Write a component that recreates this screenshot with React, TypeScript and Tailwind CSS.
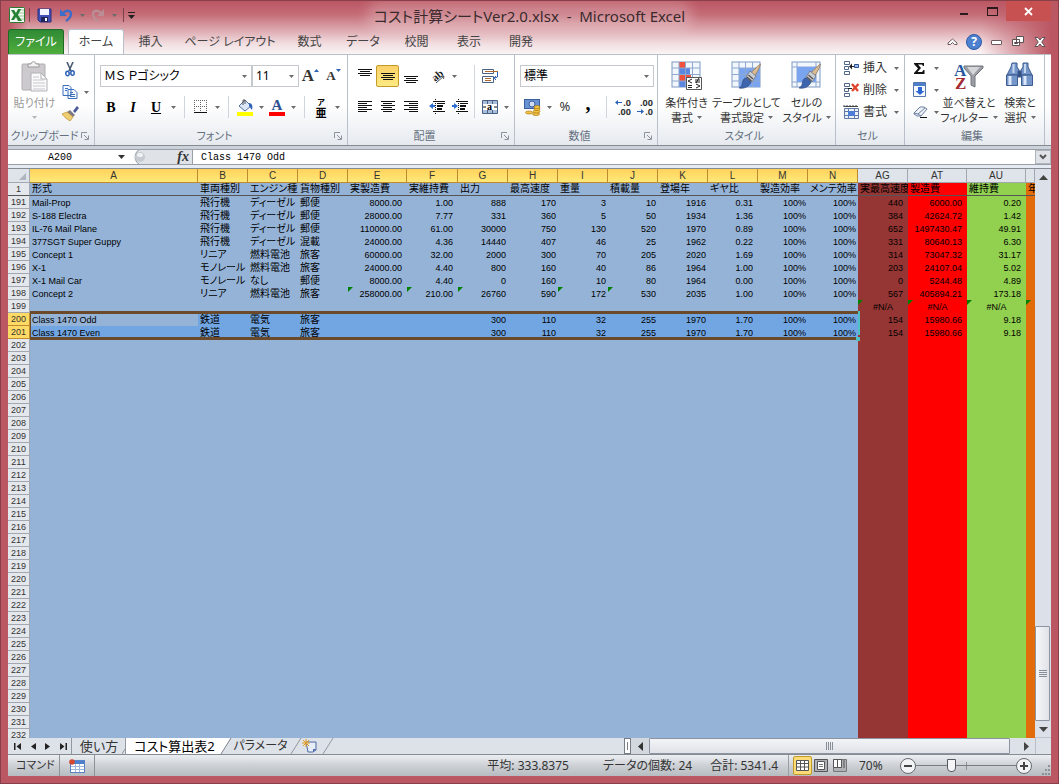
import { useState } from "react";
import type { ReactNode } from "react";

type Row = { n: number; cells: string[]; flags?: number[] };

const columns = [
  { id: "A", title: "形式" },
  { id: "B", title: "車両種別" },
  { id: "C", title: "エンジン種別" },
  { id: "D", title: "貨物種別" },
  { id: "E", title: "実製造費" },
  { id: "F", title: "実維持費" },
  { id: "G", title: "出力" },
  { id: "H", title: "最高速度" },
  { id: "I", title: "重量" },
  { id: "J", title: "積載量" },
  { id: "K", title: "登場年" },
  { id: "L", title: "ギヤ比" },
  { id: "M", title: "製造効率" },
  { id: "N", title: "メンテ効率" },
  { id: "AG", title: "実最高速度" },
  { id: "AT", title: "製造費" },
  { id: "AU", title: "維持費" },
  { id: "", title: "年" },
];

const rows: Row[] = [
  { n: 191, cells: ["Mail-Prop", "飛行機", "ディーゼル", "郵便", "8000.00", "1.00", "888", "170", "3", "10", "1916", "0.31", "100%", "100%", "440", "6000.00", "0.20"] },
  { n: 192, cells: ["S-188 Electra", "飛行機", "ディーゼル", "郵便", "28000.00", "7.77", "331", "360", "5", "50", "1934", "1.36", "100%", "100%", "384", "42624.72", "1.42"] },
  { n: 193, cells: ["IL-76 Mail Plane", "飛行機", "ディーゼル", "郵便", "110000.00", "61.00", "30000", "750", "130", "520", "1970", "0.89", "100%", "100%", "652", "1497430.47", "49.91"] },
  { n: 194, cells: ["377SGT Super Guppy", "飛行機", "ディーゼル", "混載", "24000.00", "4.36", "14440", "407", "46", "25", "1962", "0.22", "100%", "100%", "331", "80640.13", "6.30"] },
  { n: 195, cells: ["Concept 1", "リニア", "燃料電池", "旅客", "60000.00", "32.00", "2000", "300", "70", "205", "2020", "1.69", "100%", "100%", "314", "73047.32", "31.17"] },
  { n: 196, cells: ["X-1", "モノレール", "燃料電池", "旅客", "24000.00", "4.40", "800", "160", "40", "86", "1964", "1.00", "100%", "100%", "203", "24107.04", "5.02"] },
  { n: 197, cells: ["X-1 Mail Car", "モノレール", "なし", "郵便", "8000.00", "4.40", "0", "160", "10", "80", "1964", "0.00", "100%", "100%", "0", "5244.48", "4.89"] },
  { n: 198, cells: ["Concept 2", "リニア", "燃料電池", "旅客", "258000.00", "210.00", "26760", "590", "172", "530", "2035", "1.00", "100%", "100%", "567", "405894.21", "173.18"], flags: [4, 5, 6, 8, 9] },
  { n: 199, cells: ["", "", "", "", "", "", "", "", "", "", "", "", "", "", "#N/A", "#N/A", "#N/A"], flags: [14, 15, 16, 17] },
  { n: 200, cells: ["Class 1470 Odd", "鉄道", "電気", "旅客", "", "", "300", "110", "32", "255", "1970", "1.70", "100%", "100%", "154", "15980.66", "9.18"] },
  { n: 201, cells: ["Class 1470 Even", "鉄道", "電気", "旅客", "", "", "300", "110", "32", "255", "1970", "1.70", "100%", "100%", "154", "15980.66", "9.18"] },
];

for (let n = 202; n <= 232; n++) rows.push({ n, cells: [] });

const cellColor = (col: number, n: number) => {
  if (col === 14) return "bg-[#963634]";
  if (col === 15) return "bg-[#ff0000]";
  if (col === 16) return "bg-[#92d050]";
  if (col === 17) return "bg-[#e26b0a]";
  if (n === 201 || (n === 200 && col > 0)) return "bg-[#72a6e3]";
  return "bg-[#95b3d7]";
};

const cellAlign = (col: number, value: string) => {
  if (value === "#N/A") return "text-center text-[9px]";
  if (col === 0) return "pl-[2px] text-left text-[9px]";
  if (col < 4) return "pl-[2px] text-left text-[10px]";
  if ([4, 5, 11, 14, 15, 16].includes(col)) return "pr-[5px] text-right text-[9px]";
  return "pr-[2px] text-right text-[9px]";
};

const Caret = ({ light }: { light?: boolean }) => (
  <svg width="5" height="3" viewBox="0 0 5 3" className="shrink-0">
    <path d="M0 0h5L2.5 3z" fill={light ? "#b5b5b5" : "#6b6b6b"} />
  </svg>
);

const Drop = ({ label }: { label: string }) => (
  <button aria-label={label} className="flex h-[22px] w-2.5 items-center justify-center">
    <Caret />
  </button>
);

const Tool = ({ label, className = "w-[22px]", children }: { label: string; className?: string; children: ReactNode }) => (
  <button aria-label={label} className={`flex h-[22px] shrink-0 items-center justify-center ${className}`}>
    {children}
  </button>
);

const Sep = () => (
  <div className="flex h-[22px] w-3 justify-center">
    <div className="w-px bg-[#d0d5db]" />
  </div>
);

const Group = ({ title, className, launcher, children }: { title: string; className: string; launcher?: boolean; children: ReactNode }) => (
  <section className={`flex shrink-0 flex-col border-r border-[#b9c0c9] ${className}`}>
    <div className="flex flex-1">{children}</div>
    <div className="flex h-[18px] items-center pr-[5px] text-[11px] text-[#65707f]">
      <span className="flex-1 text-center whitespace-nowrap">{title}</span>
      {launcher && (
        <button aria-label={`${title}の詳細`}>
          <svg width="8" height="8" viewBox="0 0 8 8" fill="none" stroke="#8c939c">
            <path d="M.5 6V.5H6M3 3l4 4M7.500 3.500v4h-4" />
          </svg>
        </button>
      )}
    </div>
  </section>
);

const Big = ({ lines, icon, className, disabled }: { lines: string[]; icon: ReactNode; className: string; disabled?: boolean }) => (
  <button className={`flex flex-col items-center pt-1.5 text-[11px] leading-[15px] whitespace-nowrap ${disabled ? "text-[#999]" : "text-[#333]"} ${className}`}>
    <span className="flex h-[34px] items-start">{icon}</span>
    <span>{lines[0]}</span>
    <span className="flex h-[15px] items-center gap-1">
      {lines[1]}
      <Caret light={disabled} />
    </span>
  </button>
);

const Lines = ({ spans, y = 1 }: { spans: [number, number][]; y?: number }) => (
  <svg width="16" height="16" viewBox="0 0 16 16" shapeRendering="crispEdges">
    {spans.map(([x, w], i) => (
      <rect key={i} x={x} y={y + i * 2} width={w} height="1" fill="#111" />
    ))}
  </svg>
);

const Paragraph = ({ at }: { at: "l" | "c" | "r" }) => (
  <svg width="16" height="16" viewBox="0 0 16 16" shapeRendering="crispEdges" fill="#111">
    {[0, 1, 2, 3, 4, 5].map((i) => {
      const w = i % 2 ? 9 : 14;
      const x = at === "l" ? 1 : at === "c" ? 1 + (14 - w) / 2 : 15 - w;
      return <rect key={i} x={Math.floor(x)} y={2 + i * 2} width={w} height="1" />;
    })}
  </svg>
);

const Indent = ({ out }: { out?: boolean }) => (
  <svg width="17" height="16" viewBox="0 0 17 16">
    <path shapeRendering="crispEdges" stroke="#111" d="M4 2.500h12M8 4.500h8M8 6.500h5" />
    <path shapeRendering="crispEdges" stroke="#111" strokeWidth="2" d="M8 7h6M8 10h5" />
    <path shapeRendering="crispEdges" stroke="#111" d="M4 12.500h12" />
    <path stroke="#111" strokeDasharray="1 1" d="M6.500 0v15" />
    <path fill="#2c6fd0" d={out ? "M0 7l4-3v2h2v2H4v2z" : "M6 7L2 4v2H0v2h2v2z"} />
  </svg>
);

const Brush = () => (
  <g>
    <path d="M29.500 3c-4 3-7 6-9.500 9l3.500 3c3-4 5-8 6-12z" fill="#d9bb94" stroke="#8c6f50" strokeWidth=".7" />
    <path d="M19 10l6 5-4 6-6-5z" fill="#c9cdd4" stroke="#6d737c" strokeWidth=".8" />
    <path d="M17.500 14l4.500 4M16 16l4.500 4" stroke="#55504c" strokeWidth="1.200" />
    <path d="M15 17l5 4c-2 5-7 7-12 6 3-2 3-3 3.500-6 .5-2 1.500-4 3.500-4z" fill="#3d64ad" stroke="#29447c" strokeWidth=".6" />
  </g>
);

const GridIcon = ({ children }: { children?: ReactNode }) => (
  <svg width="32" height="30" viewBox="0 0 32 30">
    <rect x="1" y="1" width="28" height="25" fill="#f2f6fd" stroke="#7f99c2" />
    {children}
  </svg>
);

const CellIcon = ({ kind }: { kind: "in" | "del" | "fmt" }) => (
  <svg width="17" height="16" viewBox="0 0 17 16" fill="none">
    {kind === "fmt" ? (
      <>
        <path d="M1 1v2M4 1v2M7 1v2M10 1v2M13 1v2M1 2.500h14" stroke="#444" />
        <path d="M1.500 4.500h14v10h-14zM1.500 7.500h14M1.500 11.500h14M5.500 4.500v10M11.500 4.500v10" stroke="#5f7aa3" fill="#eef3fb" />
        <path d="M5 7h7v5H5z" fill="#4c7fd8" />
      </>
    ) : (
      <>
        <path d="M1.500 1.500h5v3h-5zM1.500 11.500h5v3h-5zM1.500 6.500h4v3h-4z" stroke="#4f6688" fill="#fff" />
        {kind === "in" ? (
          <>
            <path d="M8 6.500h3" stroke="#222" />
            <path d="M6 6.500l3-3v6z" fill="#222" />
            <path d="M11.500 4.500h4v3h-4z" stroke="#2c4f8f" fill="#9dbdf0" />
          </>
        ) : (
          <>
            <path d="M5 6.500h4" stroke="#222" />
            <path d="M9 2l6 7M15.500 2L9 9" stroke="#e0452e" strokeWidth="2.400" />
          </>
        )}
      </>
    )}
  </svg>
);

const EditRow = ({ label, children }: { label: string; children: ReactNode }) => (
  <div className="flex">
    <Tool label={label}>{children}</Tool>
    <Drop label={`${label}のオプション`} />
  </div>
);

const Select = ({ label, value, className }: { label: string; value: string; className: string }) => (
  <div className={`relative ${className}`}>
    <select aria-label={label} defaultValue={value} className="h-[22px] w-full appearance-none border border-[#c5c9ce] bg-white pr-3 pl-[3px] text-[12px] text-black">
      <option>{value}</option>
    </select>
    <span className="pointer-events-none absolute top-[10px] right-[5px]">
      <Caret />
    </span>
  </div>
);

function TitleBar() {
  return (
    <header className="flex h-7 shrink-0 items-start">
      <div className="flex h-7 w-[240px] items-center pl-px">
        <svg width="17" height="17" viewBox="0 0 17 17">
          <rect x=".5" y=".5" width="15" height="15" rx="1" fill="#f4faf2" stroke="#2c7a33" />
          <path d="M10 3h5M10 6h5M10 9h5M10 12h5" stroke="#9bc79a" />
          <path d="M2 3h3l2 3 2-4h3L9 8l4 6H9L7 10l-2 3H2l3-5z" fill="#268336" />
        </svg>
        <i className="mx-[3px] h-3.5 w-px bg-[#7b4149]" />
        <Tool label="保存">
          <svg width="15" height="15" viewBox="0 0 15 15">
            <path d="M1 1h13v13H3l-2-2z" fill="#4250b5" stroke="#27317f" />
            <path d="M3 1h9v6H3z" fill="#f3f6ff" />
            <path d="M4 9h7v5H4z" fill="#20255c" />
            <path d="M8 10h2v3H8z" fill="#fff" />
          </svg>
        </Tool>
        <Tool label="元に戻す">
          <svg width="14" height="14" viewBox="0 0 14 14" fill="none">
            <path d="M4 5c4-4 8-2 8 1 0 3-2 5-5 7" stroke="#3c6cc9" strokeWidth="2.400" />
            <path d="M1 1v7h7z" fill="#3c6cc9" />
          </svg>
        </Tool>
        <Drop label="元に戻すの履歴" />
        <Tool label="やり直し">
          <svg width="14" height="14" viewBox="0 0 14 14" fill="none">
            <path d="M10 5C6 1 2 3 2 6c0 3 2 5 5 7" stroke="#b98e94" strokeWidth="2.400" />
            <path d="M13 1v7H6z" fill="#b98e94" />
          </svg>
        </Tool>
        <Drop label="やり直しの履歴" />
        <i className="ml-1 h-3.5 w-px bg-[#7b4149]" />
        <button aria-label="クイック アクセス ツール バーのカスタマイズ" className="ml-1">
          <svg width="7" height="7" viewBox="0 0 7 7">
            <path d="M0 0h7v1H0zM0 3h7L3.500 7z" fill="#222" />
          </svg>
        </button>
      </div>
      <h1 className="flex h-7 flex-1 items-center justify-center pt-px text-[15px] whitespace-nowrap text-[#3a2a2d]">
        <span className="rounded-full bg-white/20 leading-4 shadow-[0_0_12px_8px_rgba(255,255,255,0.2)]">コスト計算シートVer2.0.xlsx&nbsp; -&nbsp; Microsoft Excel</span>
      </h1>
      <div className="flex w-[240px] justify-end">
        <button aria-label="最小化" className="flex h-5 w-7 items-center justify-center pt-1.5">
          <i className="h-[2px] w-2 bg-[#2b1a1c]" />
        </button>
        <button aria-label="最大化" className="flex h-5 w-7 items-center justify-center">
          <i className="h-[9px] w-[11px] border border-t-2 border-[#2b1a1c]" />
        </button>
        <button aria-label="閉じる" className="flex h-5 w-[45px] items-center justify-center bg-[#c75050]">
          <svg width="9" height="9" viewBox="0 0 9 9" stroke="#fff" strokeWidth="1.800">
            <path d="M1 1l7 7M8 1L1 8" />
          </svg>
        </button>
      </div>
    </header>
  );
}

function RibbonTabs() {
  const tabs = [
    ["挿入", "w-[53px]"],
    ["ページ レイアウト", "w-[106px]"],
    ["数式", "w-[53px]"],
    ["データ", "w-[54px]"],
    ["校閲", "w-[53px]"],
    ["表示", "w-[52px]"],
    ["開発", "w-[52px]"],
  ];
  return (
    <nav className="flex h-[25px] shrink-0 text-[12px] whitespace-nowrap text-[#444]">
      <button className="w-14 rounded-t-[3px] border border-b-0 border-[#1f6b25] bg-linear-to-b from-[#2f8a35] to-[#4fae3c] text-white">ファイル</button>
      <button className="ml-1 w-14 rounded-t-[3px] border border-b-0 border-[#b9c0c9] bg-white">ホーム</button>
      {tabs.map(([name, width]) => (
        <button key={name} className={width}>
          {name}
        </button>
      ))}
      <div className="ml-auto flex items-center gap-2 pr-[5px]">
        <button aria-label="リボンの最小化">
          <svg width="11" height="9" viewBox="0 0 11 9" fill="#fff" stroke="#6b5a5d">
            <path d="M1 6l4.500-4L10 6v1.500H7.500l-2-2-2 2H1z" />
          </svg>
        </button>
        <button aria-label="ヘルプ" className="flex size-4 items-center justify-center rounded-full border border-[#2c5ba8] bg-[#4d80cf] text-[12px] font-bold text-white">?</button>
        <button aria-label="ブックの最小化" className="ml-px flex h-4 w-3 items-center">
          <i className="mt-[2px] h-[5px] w-[11px] rounded-[1px] border border-[#6b5a5d] bg-white" />
        </button>
        <button aria-label="ブックを元のサイズに戻す" className="ml-px">
          <svg width="13" height="11" viewBox="0 0 13 11" fill="#fff" stroke="#5d5053">
            <path d="M4.500.5h7v6h-7zM.5 3.500h7v6h-7zM2.500 6.500h3v1h-3z" />
          </svg>
        </button>
        <button aria-label="ブックを閉じる" className="ml-px">
          <svg width="12" height="10" viewBox="0 0 12 10" fill="#fff" stroke="#5d5053">
            <path d="M1 .5h3l2 2.500 2-2.500h3L7.800 5 11 9.500H8L6 7 4 9.500H1L4.200 5z" />
          </svg>
        </button>
      </div>
    </nav>
  );
}

function Ribbon() {
  return (
    <div className="flex h-[92px] shrink-0 overflow-hidden border-y border-t-[#b9c0c9] border-b-[#868b92] bg-linear-to-b from-white from-55% to-[#e6eaef] text-[12px] text-[#333]">
      <Group title="クリップボード" className="w-[87px]" launcher>
        <Big
          disabled
          className="ml-[3px] w-[47px]"
          lines={["貼り付け", ""]}
          icon={
            <svg width="28" height="32" viewBox="0 0 28 32">
              <rect x="1" y="3" width="23" height="26" rx="1" fill="#cdcacd" stroke="#b0adb0" />
              <path d="M7 6V3h3c0-3 5-3 5 0h3v3z" fill="#f3f3f3" stroke="#999" />
              <path d="M10 12h10l6 6v12H10z" fill="#fafafa" stroke="#b0b0b4" />
              <path d="M20 12v6h6" fill="none" stroke="#b0b0b4" />
              <path d="M12 16h6M12 19h11M12 22h12M12 25h12M12 28h12" stroke="#c8c8cc" />
            </svg>
          }
        />
        <div className="flex flex-col pt-1 pl-px">
          <Tool label="切り取り">
            <svg width="14" height="16" viewBox="0 0 14 16" fill="none">
              <path d="M4 0l4 9M10 0L6 9" stroke="#4a5a72" strokeWidth="1.600" />
              <ellipse cx="4.500" cy="11.500" rx="1.700" ry="2.300" stroke="#2e62b8" strokeWidth="1.500" />
              <ellipse cx="9.500" cy="11" rx="1.700" ry="2.300" stroke="#2e62b8" strokeWidth="1.500" />
            </svg>
          </Tool>
          <div className="flex">
            <Tool label="コピー">
              <svg width="16" height="15" viewBox="0 0 16 15" fill="#f4f8ff" stroke="#3c6fbd">
                <path d="M1 .5h6l2 2v8H1zM6 4.500h6l3 3v6H6z" />
                <path d="M3 3.500h3M3 5.500h2M8 7.500h3M8 9.500h5M8 11.500h5" />
              </svg>
            </Tool>
            <Drop label="コピーのオプション" />
          </div>
          <Tool label="書式のコピー">
            <svg width="17" height="16" viewBox="0 0 17 16">
              <path d="M11 5l4-5 2 2-4 5z" fill="#4c5b9a" />
              <path d="M8 4l5 5-2 2-6-5z" fill="#7c7a86" />
              <path d="M5 6l6 5-3 4C5 13 2 11 0 8z" fill="#f0cf72" stroke="#b98d2b" strokeWidth=".7" />
            </svg>
          </Tool>
        </div>
      </Group>

      <Group title="フォント" className="w-[253px]" launcher>
        <div className="flex flex-col gap-[9px] pt-2.5 pl-[5px]">
          <div className="flex">
            <Select label="フォント名" value="ＭＳ Ｐゴシック" className="w-[152px]" />
            <Select label="フォント サイズ" value="11" className="w-[47px]" />
            <Tool label="フォント サイズの拡大" className="w-[23px]">
              <span className="font-['Liberation_Serif',serif] text-[17px] font-bold">A</span>
              <svg width="5" height="14" viewBox="0 0 5 14"><path d="M0 3h5L2.500 0z" fill="#2e62b8" /></svg>
            </Tool>
            <Tool label="フォント サイズの縮小" className="w-[23px]">
              <span className="font-['Liberation_Serif',serif] text-[13px] font-bold">A</span>
              <svg width="5" height="14" viewBox="0 0 5 14"><path d="M0 0h5L2.500 3z" fill="#2e62b8" /></svg>
            </Tool>
          </div>
          <div className="flex font-['Liberation_Serif',serif] text-[14px] text-black">
            <Tool label="太字"><b>B</b></Tool>
            <Tool label="斜体"><b className="italic">I</b></Tool>
            <Tool label="下線" className="w-6"><b className="underline">U</b></Tool>
            <Drop label="下線の種類" />
            <Sep />
            <Tool label="罫線">
              <svg width="14" height="14" viewBox="0 0 14 14" stroke="#666" fill="none">
                <path strokeDasharray="1 1" d="M.5 0v12M6.500 0v12M12.500 0v12M0 .5h13M0 6.500h13" />
                <path stroke="#111" d="M0 12.500h13" />
              </svg>
            </Tool>
            <Drop label="罫線の種類" />
            <Sep />
            <Tool label="塗りつぶしの色">
              <svg width="17" height="17" viewBox="0 0 17 17">
                <path d="M8 1l6 6-6 5-6-5z" fill="#dce8f8" stroke="#51719f" />
                <path d="M6 6V1h2v4" fill="none" stroke="#555" />
                <path d="M12 4c3 0 4 3 3 7-1-1-2-3-3-4z" fill="#2e62b8" />
                <path d="M0 13h16v4H0z" fill="#ffff00" />
              </svg>
            </Tool>
            <Drop label="塗りつぶしの色の選択" />
            <Tool label="フォントの色">
              <span className="w-4 border-b-4 border-[#ff0000] text-center text-[15px] leading-[13px] font-bold text-[#2c4f8f]">A</span>
            </Tool>
            <Drop label="フォントの色の選択" />
            <Sep />
            <Tool label="ふりがな">
              <span className="flex flex-col items-center font-['Noto_Sans_CJK_JP',sans-serif] font-bold">
                <span className="text-[8px] leading-[9px]">ア</span>
                <span className="text-[11px] leading-[12px]">亜</span>
              </span>
            </Tool>
            <Drop label="ふりがなのオプション" />
          </div>
        </div>
      </Group>

      <Group title="配置" className="w-[167px]" launcher>
        <div className="flex pt-2.5 pl-[5px]">
          <div className="flex flex-col gap-[9px]">
            <div className="flex">
              <Tool label="上揃え" className="w-[23px]"><Lines spans={[[1, 14], [3, 10], [1, 14], [3, 10]]} /></Tool>
              <Tool label="上下中央揃え" className="w-[23px] rounded-[2px] border border-[#c29b29] bg-linear-to-b from-[#fbd069] to-[#fdea82]">
                <Lines y={5} spans={[[1, 14], [3, 10], [1, 14], [3, 10]]} />
              </Tool>
              <Tool label="下揃え" className="w-[23px]"><Lines y={8} spans={[[1, 14], [3, 10], [1, 14], [3, 10]]} /></Tool>
              <Tool label="方向" className="ml-1 w-[23px]">
                <svg width="20" height="20" viewBox="0 0 20 20">
                  <text x="5" y="14" fontSize="11" fontWeight="bold" fontFamily="Liberation Serif" transform="rotate(-40 9 12)" fill="#222">ab</text>
                  <path d="M8 17l8-7M16 10l-3 .5M16 10l-.5 3" stroke="#555" fill="none" />
                </svg>
              </Tool>
              <Drop label="方向の選択" />
            </div>
            <div className="flex">
              <Tool label="左揃え" className="w-[23px]"><Paragraph at="l" /></Tool>
              <Tool label="中央揃え" className="w-[23px]"><Paragraph at="c" /></Tool>
              <Tool label="右揃え" className="w-[23px]"><Paragraph at="r" /></Tool>
              <Tool label="インデントを減らす" className="ml-1 w-[23px]"><Indent out /></Tool>
              <Tool label="インデントを増やす" className="w-[23px]"><Indent /></Tool>
            </div>
          </div>
          <div className="mx-[2px] h-[53px] w-px bg-[#d0d5db]" />
          <div className="flex flex-col gap-[9px] pl-[2px]">
            <Tool label="折り返して全体を表示する">
              <svg width="17" height="16" viewBox="0 0 17 16" fill="#fff" stroke="#4a6187">
                <path d="M.5 1.500h11v4H.5zM.5 8.500h11v6H.5z" />
                <path d="M3 3.500h13M3 10.500h6M3 12.500h6" stroke="#b0682e" />
                <path d="M15.500 4v5l-3 1M12 10l2-2M12 10l2 2" stroke="#2e62b8" fill="none" />
              </svg>
            </Tool>
            <div className="flex">
              <Tool label="セルを結合して中央揃え">
                <svg width="17" height="15" viewBox="0 0 17 15">
                  <path d="M.5.5h15v13H.5z" fill="#a9bedb" stroke="#4a6187" />
                  <path d="M5.500 0v4M10.500 0v4M5.500 10v4M10.500 10v4" stroke="#4a6187" />
                  <path d="M1 4h14v6H1z" fill="#fff" />
                  <path d="M1 7h3M12 7h3" stroke="#111" />
                  <text x="5" y="10" fontSize="10" fontWeight="bold" fontFamily="Liberation Serif">a</text>
                </svg>
              </Tool>
              <Drop label="結合のオプション" />
            </div>
          </div>
        </div>
      </Group>

      <Group title="数値" className="w-[143px]" launcher>
        <div className="flex flex-col gap-[9px] pt-2.5 pl-[5px]">
          <Select label="数値の書式" value="標準" className="w-[134px]" />
          <div className="flex">
            <Tool label="通貨表示形式" className="w-6">
              <svg width="17" height="17" viewBox="0 0 17 17">
                <rect x=".5" y=".5" width="15" height="9" fill="#6a93d6" stroke="#3b5f9c" />
                <circle cx="8" cy="5" r="3" fill="#cfdef5" stroke="#3b5f9c" />
                <g fill="#f4c545" stroke="#a97a12" strokeWidth=".7">
                  <ellipse cx="12" cy="15" rx="3.500" ry="1.500" />
                  <ellipse cx="12.500" cy="12.500" rx="3.500" ry="1.500" />
                  <ellipse cx="13" cy="10" rx="3" ry="1.500" />
                  <ellipse cx="13" cy="8" rx="3" ry="1.500" />
                  <ellipse cx="5" cy="13.500" rx="3.500" ry="1.500" />
                </g>
              </svg>
            </Tool>
            <Drop label="通貨の選択" />
            <Tool label="パーセント スタイル"><span className="text-[13px]">%</span></Tool>
            <Tool label="桁区切りスタイル" className="w-6 text-black">
              <span className="h-[22px] font-['Liberation_Serif',serif] text-[20px] leading-[14px] font-bold">,</span>
            </Tool>
            <Sep />
            <Tool label="小数点以下の表示桁数を増やす">
              <span className="flex flex-col items-end text-[9px] leading-[9px] font-bold">
                <span className="flex items-center gap-px">
                  <svg width="7" height="5" viewBox="0 0 7 5"><path d="M0 2.500L3 0v2h4v1H3v2z" fill="#2e62b8" /></svg>
                  .0
                </span>
                <span>.00</span>
              </span>
            </Tool>
            <Tool label="小数点以下の表示桁数を減らす">
              <span className="flex flex-col items-end text-[9px] leading-[9px] font-bold">
                <span>.00</span>
                <span className="flex items-center gap-px">
                  <svg width="7" height="5" viewBox="0 0 7 5"><path d="M7 2.500L4 0v2H0v1h4v2z" fill="#2e62b8" /></svg>
                  .0
                </span>
              </span>
            </Tool>
          </div>
        </div>
      </Group>

      <Group title="スタイル" className="w-[178px]">
        <Big
          className="w-[57px]"
          lines={["条件付き", "書式"]}
          icon={
            <GridIcon>
              <path d="M8 1h6v25H8z" fill="#f0503c" />
              <path d="M8 7h11v6H8zM8 20h6v6H8z" fill="#5b87e0" />
              <path d="M14 14h6v6h-6z" fill="#f0503c" />
              <path d="M1 7h28M1 13.500h28M1 20h28M8 1v25M14.500 1v25M21.500 1v25" stroke="#8fa8d0" fill="none" />
              <path d="M15.500 16.500h15v12h-15z" fill="#fff" stroke="#555" />
              <path d="M21 18l-4 2 4 2M17 24.500h4M17 26.500h4M24 19h5M24 21h5M28 17l-3 5M25 23l4 2-4 2" stroke="#222" fill="none" />
            </GridIcon>
          }
        />
        <Big
          className="w-[63px]"
          lines={["テーブルとして", "書式設定"]}
          icon={
            <GridIcon>
              <path d="M8 7h21v19H8z" fill="#7ba4ee" />
              <path d="M1 7h28M1 13.500h28M1 20h28M8 1v25M14.500 1v25M21.500 1v25" stroke="#8fa8d0" fill="none" />
              <Brush />
            </GridIcon>
          }
        />
        <Big
          className="w-[57px]"
          lines={["セルの", "スタイル"]}
          icon={
            <GridIcon>
              <path d="M1 6h28M1 21h28M6 1v25M25 1v25" stroke="#8fa8d0" fill="none" />
              <path d="M6 6h19v15H6z" fill="#7ba4ee" />
              <Brush />
            </GridIcon>
          }
        />
      </Group>

      <Group title="セル" className="w-[69px]">
        <div className="flex flex-col pt-[2px] pl-[7px]">
          <button className="flex h-[22px] items-center gap-[3px]"><CellIcon kind="in" />挿入<span className="ml-1"><Caret /></span></button>
          <button className="flex h-[22px] items-center gap-[3px]"><CellIcon kind="del" />削除<span className="ml-1"><Caret /></span></button>
          <button className="flex h-[22px] items-center gap-[3px]"><CellIcon kind="fmt" />書式<span className="ml-1"><Caret /></span></button>
        </div>
      </Group>

      <Group title="編集" className="w-[140px]">
        <div className="flex flex-col pt-[2px] pl-1">
          <EditRow label="合計">
            <svg width="12" height="11" viewBox="0 0 12 11"><path d="M0 0h10v3H9L8 1.500H4L7 5 3.500 9H8l1.500-2h1V11H0v-1l4-4.500L0 1z" fill="#111" /></svg>
          </EditRow>
          <EditRow label="フィル">
            <svg width="14" height="16" viewBox="0 0 14 16">
              <path d="M.5.5h12v14H.5z" fill="#f4f8ff" stroke="#5577ab" />
              <path d="M1 1h11v3H1z" fill="#4d7fc9" />
              <path d="M5 5h4v4h2.500L7 13 2.500 9H5z" fill="#2b66d4" />
            </svg>
          </EditRow>
          <EditRow label="クリア">
            <svg width="15" height="12" viewBox="0 0 15 12">
              <path d="M1 7l6-6h4l3 2-6 7H4L1 8z" fill="#eef2f8" stroke="#6b7f9f" />
              <path d="M1 7l4 1 3 2M5 8l7-6" fill="none" stroke="#6b7f9f" />
              <path d="M7 11.500h7" stroke="#111" />
            </svg>
          </EditRow>
        </div>
        <Big
          className="w-[56px]"
          lines={["並べ替えと", "フィルター"]}
          icon={
            <svg width="30" height="34" viewBox="0 0 30 34">
              <path d="M10 5h19v2l-8 8v11l-4-2v-9L10 7z" fill="#9b9fa5" stroke="#70757c" />
              <path d="M13 6h13l-7 8z" fill="#d4d6d9" />
              <text x="0" y="15" fontSize="17" fontWeight="bold" fontFamily="Liberation Serif" fill="#28579f">A</text>
              <text x="1" y="28" fontSize="17" fontWeight="bold" fontFamily="Liberation Serif" fill="#a32a30">Z</text>
            </svg>
          }
        />
        <Big
          className="w-[46px]"
          lines={["検索と", "選択"]}
          icon={
            <svg width="28" height="28" viewBox="0 0 28 28" fill="#7496c8" stroke="#3c5b90">
              <path d="M6 2h5v4l2 3v5h2V9l2-3V2h5v4l4 8H1l4-8z" />
              <path d="M.5 14h11v10.500H.5zM15.500 14h11v10.500h-11z" />
              <path d="M12 10h3v6h-3z" fill="#324f80" />
              <path d="M4 15v9M19 15v9" stroke="#dce8fa" strokeWidth="3" />
              <path d="M7.500 3v9M19 3v9" stroke="#c5d6ef" strokeWidth="2" />
            </svg>
          }
        />
      </Group>
    </div>
  );
}

function FormulaBar() {
  const [formula, setFormula] = useState("Class 1470 Odd");
  return (
    <div className="shrink-0 border-b border-[#868b92] bg-[#e6ebf3]">
      <div className="h-[3px] bg-[#ccd2da]" />
      <div className="flex h-4 border-y border-[#9a9fa7] bg-white font-['Liberation_Mono',monospace] text-[10px] text-black">
        <input aria-label="名前ボックス" defaultValue="A200" className="w-[104px] bg-white text-center outline-none" />
        <button aria-label="名前の一覧" className="flex w-[18px] items-center justify-center">
          <svg width="7" height="4" viewBox="0 0 7 4"><path d="M0 0h7L3.500 4z" fill="#333" /></svg>
        </button>
        <div className="flex w-[63px] items-center justify-between border-r border-[#9a9fa7] bg-[#dfe3e8] pr-[3px]">
          <svg width="22" height="14" viewBox="0 0 22 14">
            <path d="M8 0C3 3 3 11 8 14H0V0z" fill="#fff" />
            <path d="M9 0c-5 3-5 11 0 14" stroke="#9a9fa7" fill="none" />
            <circle cx="10" cy="7" r="5" fill="#c6cbd1" />
            <ellipse cx="10" cy="5" rx="3" ry="2" fill="#f0f2f5" />
          </svg>
          <button aria-label="関数の挿入" className="font-['Liberation_Serif',serif] text-[14px] leading-3 font-bold text-[#333] italic">fx</button>
        </div>
        <input aria-label="数式バー" value={formula} onChange={(e) => setFormula(e.target.value)} className="min-w-0 flex-1 bg-white pl-2 outline-none" />
        <button aria-label="数式バーの展開" className="flex w-4 items-center justify-center border border-[#b0b5bc] bg-[#dfe3e8]">
          <svg width="8" height="6" viewBox="0 0 8 6" fill="none" stroke="#555" strokeWidth="2"><path d="M1 1l3 3 3-3" /></svg>
        </button>
      </div>
      <div className="h-[3px]" />
    </div>
  );
}

function Sheet() {
  return (
    <div className="relative min-w-0 flex-1 overflow-hidden bg-[#95b3d7]">
      <table className="w-full table-fixed border-separate border-spacing-0 font-['Liberation_Sans','Noto_Sans_CJK_JP',sans-serif] leading-3 whitespace-nowrap text-black">
        <colgroup>
          <col className="w-[22px]" />
          <col className="w-[168px]" />
          <col className="w-[50px]" />
          <col className="w-[50px]" />
          <col className="w-[50px]" />
          <col className="w-[59px]" />
          <col className="w-[51px]" />
          {["G", "H", "I", "J", "K", "L", "M", "N", "AG"].map((id) => (
            <col key={id} className="w-[50px]" />
          ))}
          <col className="w-[59px]" />
          <col className="w-[59px]" />
          <col />
        </colgroup>
        <thead>
          <tr>
            <td className="h-3.5 border-r border-b border-[#a3a8b0] bg-[#dfe3ea] p-0">
              <svg width="20" height="12" viewBox="0 0 20 12"><path d="M18 3v7h-7z" fill="#b0b6bf" /></svg>
            </td>
            {columns.map((c, i) => (
              <th
                key={i}
                scope="col"
                className={`h-3.5 overflow-hidden border-r border-b p-0 text-[10px] font-normal text-[#333] ${
                  i < 14 ? "border-[#c08a2e] bg-linear-to-b from-[#ffd25c] to-[#ffe978]" : "border-[#a3a8b0] bg-[#dfe3ea]"
                }`}
              >
                {c.id}
              </th>
            ))}
          </tr>
        </thead>
        <tbody>
          <tr>
            <th scope="row" className="h-[13px] border-r border-b border-r-[#a3a8b0] border-b-[#555] bg-[#e4e7ec] p-0 text-[9px] font-normal text-[#333]">1</th>
            {columns.map((c, i) => (
              <td key={i} className={`h-[13px] overflow-hidden border-b border-[#555] p-0 pl-[2px] text-[10px] ${cellColor(i, 1)}`}>
                {c.title}
              </td>
            ))}
          </tr>
          {rows.map((row) => (
            <tr key={row.n}>
              <th
                scope="row"
                className={`h-[13px] border-r border-b p-0 text-[9px] font-normal text-[#333] ${
                  row.n === 200 || row.n === 201 ? "border-[#c08a2e] bg-[#ffdb66]" : "border-[#a3a8b0] bg-[#e4e7ec]"
                }`}
              >
                {row.n}
              </th>
              {columns.map((c, i) => {
                const value = row.cells[i] ?? "";
                return (
                  <td key={i} className={`relative h-[13px] overflow-hidden p-0 ${cellColor(i, row.n)} ${cellAlign(i, value)}`}>
                    {row.flags?.includes(i) && (
                      <svg width="5" height="5" viewBox="0 0 5 5" className="absolute top-0 left-0">
                        <path d="M0 0h5L0 5z" fill="#008000" />
                      </svg>
                    )}
                    {value}
                  </td>
                );
              })}
            </tr>
          ))}
        </tbody>
      </table>
      {/* selection A200:N201 */}
      <div className="pointer-events-none absolute top-[142px] left-[22px] h-[29px] w-[829px] border-y-3 border-l border-[#6b4a2a]">
        <div className="absolute -top-[3px] -right-px h-6 w-[2px] bg-[#4fc0c4]" />
        <div className="absolute -right-px -bottom-1 size-1 bg-[#4fc0c4]" />
      </div>
    </div>
  );
}

function VerticalScroll() {
  return (
    <div className="flex w-4 shrink-0 flex-col bg-[#dbe0e9]">
      <button aria-label="上へ" className="flex h-[17px] items-center justify-center">
        <svg width="9" height="5" viewBox="0 0 9 5"><path d="M0 5h9L4.500 0z" fill="#444" /></svg>
      </button>
      <div className="flex flex-1 flex-col justify-end">
        <div className="flex h-[95px] w-[15px] flex-col items-center justify-center gap-px rounded-[1px] border border-[#8d949f] bg-linear-to-r from-[#f6f7f9] to-[#dfe2e8]">
          <i className="h-px w-2 bg-[#888e98]" />
          <i className="h-px w-2 bg-[#888e98]" />
          <i className="h-px w-2 bg-[#888e98]" />
          <i className="h-px w-2 bg-[#888e98]" />
        </div>
      </div>
      <button aria-label="下へ" className="flex h-[17px] items-center justify-center border-b border-[#c0c5cd]">
        <svg width="9" height="5" viewBox="0 0 9 5"><path d="M0 0h9L4.500 5z" fill="#444" /></svg>
      </button>
    </div>
  );
}

function SheetTabs() {
  return (
    <div className="flex h-4 shrink-0 bg-[#dde1e8] text-[13px] leading-4 whitespace-nowrap text-[#333]">
      <div className="flex w-[63px] items-center justify-around pl-px">
        <button aria-label="最初のシート"><svg width="8" height="7" viewBox="0 0 8 7" fill="#222"><path d="M0 0h1.500v7H0zM7 0v7L2.500 3.500z" /></svg></button>
        <button aria-label="前のシート"><svg width="5" height="7" viewBox="0 0 5 7" fill="#222"><path d="M5 0v7L0 3.500z" /></svg></button>
        <button aria-label="次のシート"><svg width="5" height="7" viewBox="0 0 5 7" fill="#222"><path d="M0 0v7l5-3.500z" /></svg></button>
        <button aria-label="最後のシート"><svg width="8" height="7" viewBox="0 0 8 7" fill="#222"><path d="M1 0v7l4.500-3.500zM6.500 0H8v7H6.500z" /></svg></button>
      </div>
      <button className="w-[51px] border-l border-[#9298a1] pl-1">使い方</button>
      <svg width="4" height="16" viewBox="0 0 4 16"><path d="M3.500 0v16M3 11l-3 5" stroke="#9298a1" fill="none" /></svg>
      <button className="w-[93px] bg-white pl-1 text-black">コスト算出表2</button>
      <svg width="13" height="16" viewBox="0 0 13 16"><path d="M0 0h12L2 16H0z" fill="#fff" /><path d="M12 0L2 16" stroke="#7d838c" /></svg>
      <button className="w-[57px] text-center text-[12px]">パラメータ</button>
      <svg width="13" height="16" viewBox="0 0 13 16"><path d="M12 0L2 16" stroke="#9298a1" /></svg>
      <button aria-label="ワークシートの挿入">
        <svg width="16" height="14" viewBox="0 0 16 14">
          <path d="M4 3h10v8l-3 2H6z" fill="#e6edf9" stroke="#4a69a5" />
          <path d="M11 13v-3h3z" fill="#4a69a5" />
          <path d="M4 0v8M0 4h8M1 1l6 6M7 1L1 7" stroke="#e29b23" />
        </svg>
      </button>
      <svg width="13" height="16" viewBox="0 0 13 16" className="ml-[3px]"><path d="M12 0L2 16" stroke="#9298a1" /></svg>
      <div className="ml-auto flex w-[427px]">
        <i className="flex w-[7px] items-center justify-center border border-[#777d87] bg-white"><i className="h-2 w-px bg-[#777d87]" /></i>
        <button aria-label="左へ" className="flex w-[18px] items-center justify-center bg-[#d3d8df]">
          <svg width="5" height="9" viewBox="0 0 5 9"><path d="M5 0v9L0 4.500z" fill="#333" /></svg>
        </button>
        <div className="flex flex-1 items-center justify-center gap-px rounded-[1px] border border-[#8d949f] bg-linear-to-b from-[#f3f4f7] to-[#dfe2e8]">
          <i className="h-2 w-px bg-[#888e98]" />
          <i className="h-2 w-px bg-[#888e98]" />
          <i className="h-2 w-px bg-[#888e98]" />
          <i className="h-2 w-px bg-[#888e98]" />
        </div>
        <button aria-label="右へ" className="flex w-[25px] items-center justify-center pl-2">
          <svg width="5" height="9" viewBox="0 0 5 9"><path d="M0 0v9l5-4.500z" fill="#444" /></svg>
        </button>
        <i className="w-4 border-l border-[#b9bec7] bg-[#dde1e8]" />
      </div>
    </div>
  );
}

function StatusBar() {
  return (
    <footer className="flex h-[22px] shrink-0 items-center border-t border-[#868b92] bg-linear-to-b from-[#eceff2] via-[#cdd1d6] to-[#b7bcc1] text-[12px] whitespace-nowrap text-[#333]">
      <span className="w-[51px] pl-2 text-[11px]">コマンド</span>
      <i className="h-full w-px bg-[#8e9399]" />
      <button aria-label="マクロの記録" className="flex w-[34px] justify-center">
        <svg width="16" height="14" viewBox="0 0 16 14">
          <rect x="1.500" y="1.500" width="14" height="12" fill="#fff" stroke="#5a83c4" />
          <path d="M2 2h13v3H2z" fill="#4d7fd0" />
          <path d="M2 7.500h13M2 10.500h13M6.500 5v8M10.500 5v8" stroke="#9fb8de" />
          <circle cx="3" cy="3" r="2.800" fill="#d3482f" />
        </svg>
      </button>
      <i className="h-full w-px bg-[#8e9399]" />
      <span className="ml-auto">平均: 333.8375</span>
      <span className="ml-[34px]">データの個数: 24</span>
      <span className="ml-[18px]">合計: 5341.4</span>
      <i className="ml-2.5 h-full w-px bg-[#9a9fa5]" />
      <button aria-label="標準" className="ml-1 flex h-[19px] w-[19px] items-center justify-center rounded-[2px] border border-[#c29b29] bg-[#fddc78]">
        <svg width="13" height="11" viewBox="0 0 13 11"><path d="M.5.500h12v10H.5zM.5 3.500h12M.5 7h12M4.500.5v10M8.500.5v10" fill="#fff" stroke="#555" /></svg>
      </button>
      <button aria-label="ページ レイアウト" className="ml-[2px]">
        <svg width="14" height="13" viewBox="0 0 14 13"><path d="M.5.500h13v12H.5z" fill="#aeb2b7" stroke="#555" /><path d="M3.500 2.500h7v8h-7z" fill="#fff" stroke="#555" /><path d="M5 5.500h4M5 7.500h4" stroke="#777" /></svg>
      </button>
      <button aria-label="改ページ プレビュー" className="ml-[5px]">
        <svg width="14" height="13" viewBox="0 0 14 13"><path d="M.5.500h13v12H.5z" fill="#aeb2b7" stroke="#777" /><path d="M.5.500h8v8h-8zM4.500.5v8M11 1v8" fill="#fff" stroke="#555" /></svg>
      </button>
      <button className="ml-3 w-7 text-left">70%</button>
      <button aria-label="縮小" className="ml-[13px] flex size-4 items-center justify-center rounded-full border border-[#666b71] bg-[#f2f3f5]">
        <i className="h-[2px] w-2 bg-[#444]" />
      </button>
      <input
        type="range"
        aria-label="ズーム"
        min={0}
        max={100}
        defaultValue={34}
        className="h-4 w-[100px] appearance-none bg-[linear-gradient(#777c82,#777c82),linear-gradient(#8e9399,#8e9399)] bg-[length:100%_1px,1px_8px] bg-center bg-no-repeat [&::-webkit-slider-thumb]:h-[13px] [&::-webkit-slider-thumb]:w-[9px] [&::-webkit-slider-thumb]:appearance-none [&::-webkit-slider-thumb]:rounded-b-[4px] [&::-webkit-slider-thumb]:border [&::-webkit-slider-thumb]:border-[#555a60] [&::-webkit-slider-thumb]:bg-[#f4f5f7]"
      />
      <button aria-label="拡大" className="flex size-4 items-center justify-center rounded-full border border-[#666b71] bg-[#f2f3f5]">
        <svg width="8" height="8" viewBox="0 0 8 8"><path d="M3 0h2v3h3v2H5v3H3V5H0V3h3z" fill="#444" /></svg>
      </button>
      <svg width="10" height="20" viewBox="0 0 10 20" className="ml-[9px]" fill="#8c9197">
        <path d="M7 9h2v2H7zM4 13h2v2H4zM7 13h2v2H7zM1 17h2v2H1zM4 17h2v2H4zM7 17h2v2H7z" />
      </svg>
    </footer>
  );
}

export default function App() {
  return (
    <div className="flex h-screen flex-col overflow-hidden border border-[#87404a] bg-[#bb5763] px-[7px] pb-[7px] font-['Noto_Sans','Noto_Sans_CJK_JP',sans-serif] [font-feature-settings:'palt']">
      <div className="shrink-0 bg-[linear-gradient(to_right,#bb5763,transparent_20px,transparent_calc(100%-70px),#bb5763),linear-gradient(#bb5763,#c46c77_25%,#dda9af_55%,#f1dde0_80%,#fbf4f5)]">
        <TitleBar />
        <RibbonTabs />
      </div>
      <Ribbon />
      <FormulaBar />
      <main className="flex min-h-0 flex-1">
        <Sheet />
        <VerticalScroll />
      </main>
      <SheetTabs />
      <StatusBar />
    </div>
  );
}
